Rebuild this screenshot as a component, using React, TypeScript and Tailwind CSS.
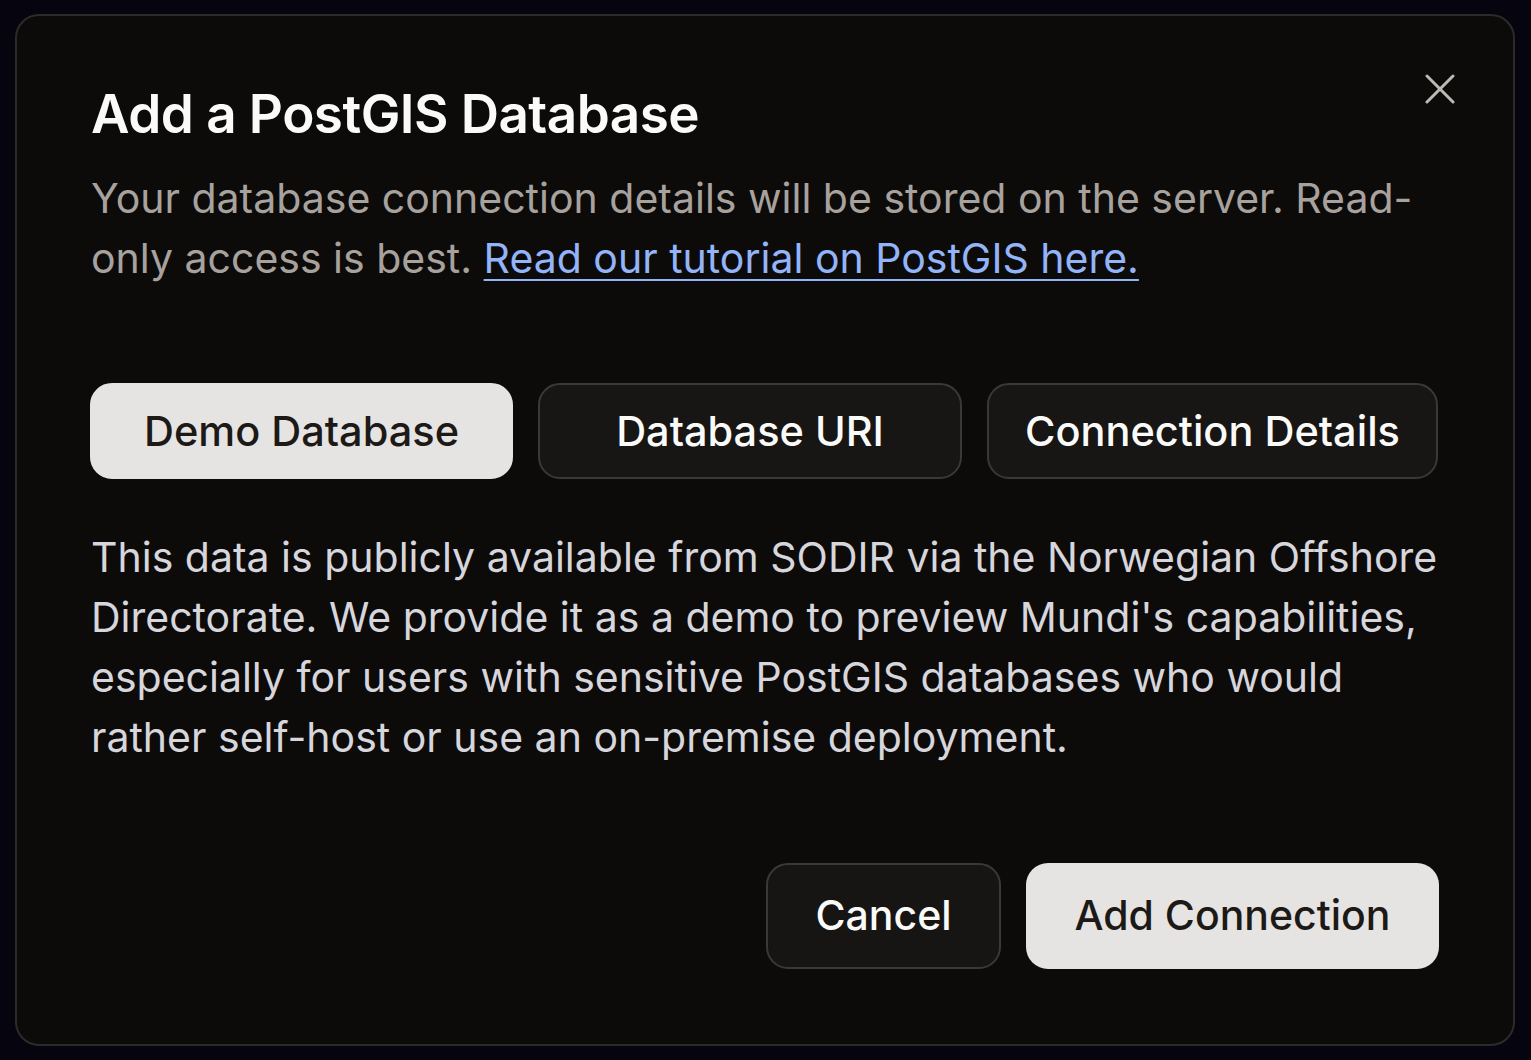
import { useState } from 'react';

type Mode = 'demo' | 'uri' | 'details';

const TABS: { id: Mode; label: string; width: string }[] = [
  { id: 'demo', label: 'Demo Database', width: 'w-[423px]' },
  { id: 'uri', label: 'Database URI', width: 'w-[424px]' },
  { id: 'details', label: 'Connection Details', width: 'w-[451px]' },
];

function CloseIcon() {
  return (
    <svg width="30" height="30" viewBox="0 0 30 30" fill="none" stroke="#bdb9b5" strokeWidth="3" strokeLinecap="round">
      <path d="M2 2 L28 28" />
      <path d="M28 2 L2 28" />
    </svg>
  );
}

export default function App() {
  const [mode, setMode] = useState<Mode>('demo');

  return (
    <div className="min-h-screen bg-[#05040f] px-[15px] pt-[14px] font-['Inter','Noto_Sans',sans-serif]">
      {/* 다이얼로그 */}
      <div className="relative flex h-[1032px] w-[1500px] flex-col rounded-[24px] border-2 border-[#2c2b2a] bg-[#0c0b0a] pl-[73px] pr-[74px] pt-[68px]">
        <button className="absolute right-[58px] top-[58px] p-0" aria-label="Close">
          <CloseIcon />
        </button>

        <h2 className="pl-px text-[53px] font-semibold leading-[60px] tracking-[-0.01em] text-[#fafaf9]">
          Add a PostGIS Database
        </h2>
        <p className="mt-[24px] pl-px text-[41px] leading-[60px] text-[#a8a29e]">
          Your database connection details will be stored on the server. Read-only access is best.{' '}
          <a href="#" className="text-[#93b4f8] underline decoration-2 underline-offset-[6px]">
            Read our tutorial on PostGIS here.
          </a>
        </p>

        {/* 연결 방식 선택 */}
        <div className="mt-[95px] flex gap-[25px]">
          {TABS.map((tab) => (
            <button
              key={tab.id}
              onClick={() => setMode(tab.id)}
              className={`${tab.width} h-[96px] shrink-0 rounded-[22px] border-2 text-[41.5px] font-medium ${
                mode === tab.id
                  ? 'border-[#e5e4e2] bg-[#e5e4e2] text-[#1c1917]'
                  : 'border-[#3a3938] bg-[#171615] text-[#fafaf9]'
              }`}
            >
              {tab.label}
            </button>
          ))}
        </div>

        <p className="mt-[48px] pl-px text-[41px] leading-[60px] text-[#d6d6dc]">
          This data is publicly available from SODIR via the Norwegian Offshore Directorate. We provide it as a demo to
          preview Mundi's capabilities, especially for users with sensitive PostGIS databases who would rather self-host
          or use an on-premise deployment.
        </p>

        {/* 하단 버튼 */}
        <div className="mt-[96px] flex justify-end gap-[25px]">
          <button className="h-[106px] w-[235px] rounded-[22px] border-2 border-[#3a3938] bg-[#161514] text-[41px] font-medium text-[#fafaf9]">
            Cancel
          </button>
          <button className="h-[106px] w-[413px] rounded-[22px] bg-[#e5e4e2] text-[41px] font-medium text-[#1c1917]">
            Add Connection
          </button>
        </div>
      </div>
    </div>
  );
}
